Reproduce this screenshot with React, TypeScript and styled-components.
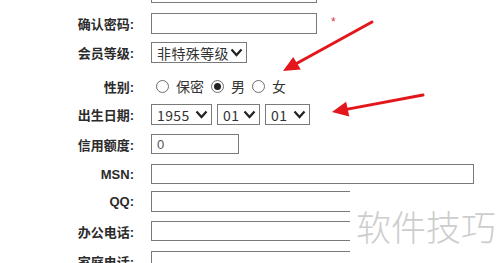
import React from 'react';
import styled, { createGlobalStyle } from 'styled-components';

const GlobalStyle = createGlobalStyle`
  html, body {
    margin: 0;
    padding: 0;
    background: #fff;
    overflow: hidden;
  }
  body {
    font-family: "Liberation Sans", "Noto Sans CJK SC", sans-serif;
    color: #333;
  }
`;

const Page = styled.div`
  position: relative;
  width: 500px;
  height: 263px;
  overflow: hidden;
`;

const Form = styled.div`
  display: flex;
  flex-direction: column;
  margin-top: -18px;
`;

const Row = styled.div<{ $mt: number }>`
  display: grid;
  grid-template-columns: 134px auto;
  column-gap: 17px;
  align-items: center;
  margin-top: ${(p) => p.$mt}px;
`;

const Label = styled.div`
  text-align: right;
  font-size: 13px;
  font-weight: bold;
  color: #2b2b2b;
  white-space: nowrap;
`;

const Field = styled.div`
  display: flex;
  align-items: center;
`;

const TextBox = styled.div<{ $w: number; $h?: number }>`
  box-sizing: border-box;
  width: ${(p) => p.$w}px;
  height: ${(p) => p.$h ?? 21}px;
  border: 1px solid #7a7a7a;
  background: #fff;
  font-size: 13px;
  color: #555;
  display: flex;
  align-items: center;
  padding-left: 5px;
`;

const Required = styled.span`
  color: #d23a3a;
  font-size: 12px;
  margin-left: 14px;
  margin-top: -4px;
`;

const SelectBox = styled.div<{ $w: number; $h?: number }>`
  box-sizing: border-box;
  width: ${(p) => p.$w}px;
  height: ${(p) => p.$h ?? 21}px;
  border: 1px solid #7a7a7a;
  display: flex;
  align-items: center;
  justify-content: space-between;
  padding: 0 3px 0 5px;
  font-size: 14px;
  color: #333;
  font-family: "Noto Sans CJK SC", "Liberation Sans", sans-serif;
  letter-spacing: 0.4px;
`;

const Selects = styled.div`
  display: flex;
  gap: 5px;
`;

const Radios = styled.div`
  display: flex;
  align-items: center;
  height: 20px;
  padding-left: 5px;
`;

const RadioItem = styled.label`
  display: flex;
  align-items: center;
  gap: 7px;
  margin-right: 7px;
  font-size: 14px;
  color: #333;
  font-family: "Noto Sans CJK SC", sans-serif;
`;

const Circle = styled.span<{ $on?: boolean }>`
  box-sizing: border-box;
  width: 13px;
  height: 13px;
  border-radius: 50%;
  border: 1px solid #6e6e6e;
  display: flex;
  align-items: center;
  justify-content: center;
  &::after {
    content: '';
    width: 7px;
    height: 7px;
    border-radius: 50%;
    background: ${(p) => (p.$on ? '#222' : 'transparent')};
  }
`;

const Watermark = styled.div`
  position: absolute;
  left: 350px;
  top: 187px;
  width: 150px;
  height: 76px;
  background: #fff;
  display: flex;
  align-items: center;
  padding-left: 6px;
  box-sizing: border-box;
  font-family: "Noto Sans CJK SC", sans-serif;
  font-weight: 300;
  font-size: 35px;
  color: #cdcdcd;
`;

const Arrows = styled.svg`
  position: absolute;
  left: 0;
  top: 0;
  pointer-events: none;
`;

function Chevron() {
  return (
    <svg width="13" height="9" viewBox="0 0 13 9">
      <polyline points="1.5,1.5 6.5,7 11.5,1.5" fill="none" stroke="#222" strokeWidth="2.2" />
    </svg>
  );
}

function Select({ value, w }: { value: string; w: number }) {
  return (
    <SelectBox $w={w}>
      <span>{value}</span>
      <Chevron />
    </SelectBox>
  );
}

export default function App() {
  return (
    <Page>
      <GlobalStyle />
      <Form>
        <Row $mt={0}>
          <Label />
          <Field>
            <TextBox $w={166} />
          </Field>
        </Row>
        <Row $mt={10}>
          <Label>确认密码:</Label>
          <Field>
            <TextBox $w={166} />
            <Required>*</Required>
          </Field>
        </Row>
        <Row $mt={8}>
          <Label>会员等级:</Label>
          <Field>
            <Select value="非特殊等级" w={96} />
          </Field>
        </Row>
        <Row $mt={13}>
          <Label>性别:</Label>
          <Radios>
            <RadioItem><Circle />保密</RadioItem>
            <RadioItem><Circle $on />男</RadioItem>
            <RadioItem><Circle />女</RadioItem>
          </Radios>
        </Row>
        <Row $mt={8}>
          <Label>出生日期:</Label>
          <Selects>
            <Select value="1955" w={61} />
            <Select value="01" w={43} />
            <Select value="01" w={45} />
          </Selects>
        </Row>
        <Row $mt={9}>
          <Label>信用额度:</Label>
          <Field>
            <TextBox $w={88} $h={20}>0</TextBox>
          </Field>
        </Row>
        <Row $mt={10}>
          <Label>MSN:</Label>
          <Field>
            <TextBox $w={323} $h={20} />
          </Field>
        </Row>
        <Row $mt={7}>
          <Label>QQ:</Label>
          <Field>
            <TextBox $w={323} />
          </Field>
        </Row>
        <Row $mt={9}>
          <Label>办公电话:</Label>
          <Field>
            <TextBox $w={323} $h={20} />
          </Field>
        </Row>
        <Row $mt={10}>
          <Label>家庭电话:</Label>
          <Field>
            <TextBox $w={323} />
          </Field>
        </Row>
      </Form>

      <Arrows width="500" height="263" viewBox="0 0 500 263">
        <g stroke="#e3161c" strokeWidth="3" strokeLinecap="round">
          <line x1="372" y1="22" x2="297" y2="63.3" />
          <line x1="423" y1="95" x2="347.7" y2="109.1" />
        </g>
        <g fill="#e3161c">
          <polygon points="283,71 300.8,69.5 293.2,57.1" />
          <polygon points="332,112 349.3,116.5 346.1,101.7" />
        </g>
      </Arrows>

      <Watermark>软件技巧</Watermark>
    </Page>
  );
}
